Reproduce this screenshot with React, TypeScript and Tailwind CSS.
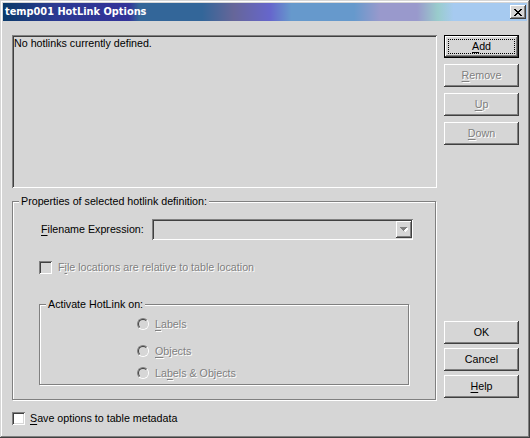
import type { ReactNode } from "react";

const RAISED =
  "shadow-[inset_-1px_-1px_0_#404040,inset_1px_1px_0_#fff,inset_-2px_-2px_0_#808080]";
const SUNKEN =
  "shadow-[inset_1px_1px_0_#808080,inset_-1px_-1px_0_#fff,inset_2px_2px_0_#404040,inset_-2px_-2px_0_#d6d6d6]";
const ETCHED =
  "border border-[#808080] shadow-[inset_1px_1px_0_#fff,1px_1px_0_#fff]";
const DISABLED_TEXT = "text-[#808080] [text-shadow:1px_1px_0_#fff]";

function Mn({ children }: { children: ReactNode }) {
  return <span className="underline underline-offset-[2px]">{children}</span>;
}

interface WinButtonProps {
  children: ReactNode;
  disabled?: boolean;
  isDefault?: boolean;
}

function WinButton({ children, disabled, isDefault }: WinButtonProps) {
  const textClass = disabled ? DISABLED_TEXT : "text-black";

  if (isDefault) {
    return (
      <div className="h-[23px] w-[75px] border border-black">
        <div className={`flex h-full w-full p-[3px] ${RAISED}`}>
          <div
            className={`flex flex-1 items-center justify-center border border-dotted border-black leading-[13px] ${textClass}`}
          >
            {children}
          </div>
        </div>
      </div>
    );
  }

  return (
    <div
      className={`flex h-[23px] w-[75px] items-center justify-center leading-[13px] ${RAISED} ${textClass}`}
    >
      {children}
    </div>
  );
}

function CheckBox({ disabled }: { disabled?: boolean }) {
  return (
    <span
      className={`block h-[13px] w-[13px] shrink-0 ${SUNKEN} ${disabled ? "bg-[#d6d6d6]" : "bg-white"}`}
    />
  );
}

function Radio({ label }: { label: ReactNode }) {
  return (
    <div className="flex h-[12px] items-center gap-[6px]">
      <span className="block h-[12px] w-[12px] rounded-full border border-t-[#808080] border-l-[#808080] border-r-white border-b-white">
        <span className="block h-full w-full rounded-full border border-t-[#404040] border-l-[#404040] border-r-[#d6d6d6] border-b-[#d6d6d6] bg-[#d6d6d6]" />
      </span>
      <span className={`leading-[13px] ${DISABLED_TEXT}`}>{label}</span>
    </div>
  );
}

function CloseGlyph() {
  return (
    <svg width="8" height="7" viewBox="0 0 8 7" shapeRendering="crispEdges" aria-hidden="true">
      <path
        fill="#000"
        d="M0 0h2v1h-2z M6 0h2v1h-2z M1 1h2v1h-2z M5 1h2v1h-2z M2 2h4v1h-4z M3 3h2v1h-2z M2 4h4v1h-4z M1 5h2v1h-2z M5 5h2v1h-2z M0 6h2v1h-2z M6 6h2v1h-2z"
      />
    </svg>
  );
}

function ArrowGlyph() {
  return (
    <svg width="8" height="5" viewBox="0 0 8 5" shapeRendering="crispEdges" aria-hidden="true">
      <path fill="#fff" d="M2 1h7v1h-7z M3 2h5v1h-5z M4 3h3v1h-3z M5 4h1v1h-1z" />
      <path fill="#808080" d="M0 0h7v1h-7z M1 1h5v1h-5z M2 2h3v1h-3z M3 3h1v1h-1z" />
    </svg>
  );
}

export default function App() {
  return (
    <div
      className={`flex h-[438px] w-[530px] flex-col bg-[#d6d6d6] p-[3px] text-[10.7px] text-black font-['Liberation_Sans',Arial,sans-serif] shadow-[inset_-1px_-1px_0_#404040,inset_1px_1px_0_#d6d6d6,inset_-2px_-2px_0_#808080,inset_2px_2px_0_#fff]`}
    >
      {/* Title bar */}
      <div className="flex h-[18px] shrink-0 items-center justify-between bg-[linear-gradient(90deg,#0a3a6a_0%,#2c3a92_10%,#333399_24%,#336699_26%,#336699_38%,#666699_44%,#6666cc_51%,#6699cc_55%,#6699cc_67%,#9999cc_72%,#9999cc_79%,#99cccc_83%,#a6caf0_86%,#a6caf0_100%)] pl-[2px] pr-[1px]">
        <span className="font-['DejaVu_Sans',Verdana,sans-serif] text-[9.8px] font-bold leading-[18px] text-white">
          temp001 HotLink Options
        </span>
        <div className={`flex h-[14px] w-[16px] items-center justify-center bg-[#d6d6d6] ${RAISED}`}>
          <CloseGlyph />
        </div>
      </div>

      {/* Body */}
      <div className="flex gap-[7px] pl-[9px] pt-[14px]">
        {/* Left column */}
        <div className="flex w-[425px] flex-col">
          <div className={`h-[153px] w-[425px] p-[2px] leading-[13px] ${SUNKEN}`}>
            No hotlinks currently defined.
          </div>

          <div className={`relative mt-[13px] h-[199px] w-[424px] ${ETCHED}`}>
            <span className="absolute left-[6px] top-[-7px] bg-[#d6d6d6] px-[2px] leading-[13px]">
              Properties of selected hotlink definition:
            </span>

            <div className="flex flex-col pt-[17px]">
              <div className="flex h-[21px] items-center pl-[28px]">
                <span className="w-[111px] leading-[13px]">
                  <Mn>F</Mn>ilename Expression:
                </span>
                <div className={`flex h-[21px] w-[261px] items-center justify-end pr-[1px] ${SUNKEN}`}>
                  <div className={`flex h-[17px] w-[16px] items-center justify-center ${RAISED}`}>
                    <ArrowGlyph />
                  </div>
                </div>
              </div>

              <div className="mt-[21px] flex h-[13px] items-center gap-[6px] pl-[26px]">
                <CheckBox disabled />
                <span className={`leading-[13px] ${DISABLED_TEXT}`}>
                  F<Mn>i</Mn>le locations are relative to table location
                </span>
              </div>

              <div className={`relative ml-[26px] mt-[30px] h-[81px] w-[370px] ${ETCHED}`}>
                <span className="absolute left-[6px] top-[-7px] bg-[#d6d6d6] px-[2px] leading-[13px]">
                  Activate HotLink on:
                </span>
                <div className="flex flex-col pl-[97px] pt-[13px]">
                  <Radio label={<><Mn>L</Mn>abels</>} />
                  <div className="mt-[15px]">
                    <Radio label={<><Mn>O</Mn>bjects</>} />
                  </div>
                  <div className="mt-[10px]">
                    <Radio label={<>La<Mn>b</Mn>els &amp; Objects</>} />
                  </div>
                </div>
              </div>
            </div>
          </div>

          <div className="mt-[12px] flex h-[13px] items-center gap-[5px]">
            <CheckBox />
            <span className="leading-[13px]">
              <Mn>S</Mn>ave options to table metadata
            </span>
          </div>
        </div>

        {/* Right column */}
        <div className="flex w-[75px] flex-col">
          <div className="flex flex-col gap-[6px]">
            <WinButton isDefault>
              <Mn>A</Mn>dd
            </WinButton>
            <WinButton disabled>
              <Mn>R</Mn>emove
            </WinButton>
            <WinButton disabled>
              <Mn>U</Mn>p
            </WinButton>
            <WinButton disabled>
              <Mn>D</Mn>own
            </WinButton>
          </div>
          <div className="mt-[176px] flex flex-col gap-[4px]">
            <WinButton>OK</WinButton>
            <WinButton>Cancel</WinButton>
            <WinButton>
              <Mn>H</Mn>elp
            </WinButton>
          </div>
        </div>
      </div>
    </div>
  );
}
